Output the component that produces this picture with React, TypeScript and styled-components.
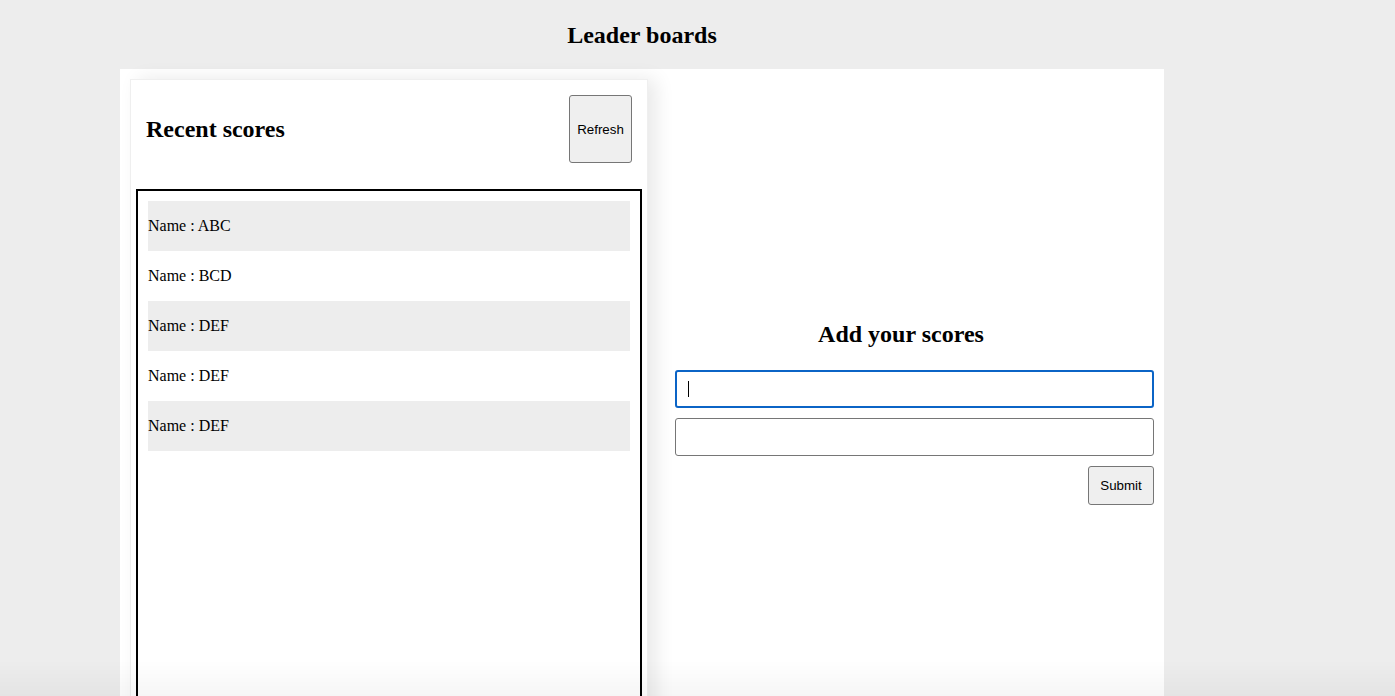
import React from "react";
import styled, { createGlobalStyle } from "styled-components";

const GlobalStyle = createGlobalStyle`
    body {
        margin: 0;
        background: #ededed;
        font-family: "Liberation Serif", "Times New Roman", serif;
        color: #000;
    }
    body::after {
        content: "";
        position: fixed;
        left: 0;
        right: 0;
        bottom: 0;
        height: 36px;
        pointer-events: none;
        background: linear-gradient(rgba(0, 0, 0, 0), rgba(0, 0, 0, 0.035));
    }
`;

const scores = ["ABC", "BCD", "DEF", "DEF", "DEF"];

const App = () => {
    return (
        <>
            <GlobalStyle />
            <Page>
                <PageTitle>Leader boards</PageTitle>
                <Board>
                    <ScoresCard>
                        <CardHeader>
                            <CardTitle>Recent scores</CardTitle>
                            <RefreshButton>Refresh</RefreshButton>
                        </CardHeader>
                        <ScoreList>
                            {scores.map((name, i) => (
                                <ScoreRow key={i} shaded={i % 2 === 0}>
                                    Name : {name}
                                </ScoreRow>
                            ))}
                        </ScoreList>
                    </ScoresCard>
                    <FormColumn>
                        <FormTitle>Add your scores</FormTitle>
                        <ScoreForm onSubmit={(e) => e.preventDefault()}>
                            <InputWrap>
                                <TextInput focused />
                                <Caret />
                            </InputWrap>
                            <TextInput />
                            <SubmitRow>
                                <SubmitButton type="submit">Submit</SubmitButton>
                            </SubmitRow>
                        </ScoreForm>
                    </FormColumn>
                </Board>
            </Page>
        </>
    );
};

const Page = styled.div`
    width: 1044px;
    margin: 0 0 0 120px;
`;

const PageTitle = styled.h2`
    margin: 0;
    height: 69px;
    line-height: 70px;
    font-size: 24px;
    font-weight: 700;
    text-align: center;
`;

const Board = styled.div`
    display: flex;
    align-items: flex-start;
    background: #fff;
    padding: 10px 10px 0;
    height: 700px;
    box-sizing: border-box;
`;

const ScoresCard = styled.section`
    width: 518px;
    height: 680px;
    flex-shrink: 0;
    box-sizing: border-box;
    background: #fff;
    border: 1px solid #efefef;
    box-shadow: 8px 0 18px rgba(0, 0, 0, 0.09);
    padding: 0 5px;
`;

const CardHeader = styled.div`
    display: flex;
    align-items: center;
    justify-content: space-between;
    padding: 15px 10px 26px;
`;

const CardTitle = styled.h2`
    margin: 0;
    font-size: 24px;
    font-weight: 700;
`;

const RefreshButton = styled.button`
    width: 63px;
    height: 68px;
    padding: 0;
    font-family: "Liberation Sans", Arial, sans-serif;
    font-size: 13.33px;
    color: #000;
    background: #efefef;
    border: 1px solid #767676;
    border-radius: 3px;
`;

const ScoreList = styled.div`
    border: 2px solid #000;
    padding: 10px;
    height: 600px;
    box-sizing: border-box;
`;

const ScoreRow = styled.div<{ shaded: boolean }>`
    height: 50px;
    display: flex;
    align-items: center;
    font-size: 16px;
    background: ${({ shaded }) => (shaded ? "#ededed" : "#fff")};
`;

const FormColumn = styled.div`
    flex: 1;
    display: flex;
    flex-direction: column;
    padding-top: 240px;
`;

const FormTitle = styled.h2`
    margin: 0 0 21px;
    font-size: 24px;
    font-weight: 700;
    text-align: center;
    line-height: 30px;
`;

const ScoreForm = styled.form`
    display: flex;
    flex-direction: column;
    gap: 10px;
    padding: 0 0 0 27px;
`;

const InputWrap = styled.div`
    position: relative;
`;

const TextInput = styled.input<{ focused?: boolean }>`
    display: block;
    width: 100%;
    height: 38px;
    box-sizing: border-box;
    border-radius: 3px;
    outline: none;
    font-size: 16px;
    padding: 0 12px;
    border: ${({ focused }) =>
        focused ? "2px solid #0b64c6" : "1px solid #767676"};
`;

const Caret = styled.span`
    position: absolute;
    left: 13px;
    top: 11px;
    width: 1px;
    height: 16px;
    background: #000;
`;

const SubmitRow = styled.div`
    display: flex;
    justify-content: flex-end;
`;

const SubmitButton = styled.button`
    width: 66px;
    height: 39px;
    padding: 0;
    font-family: "Liberation Sans", Arial, sans-serif;
    font-size: 13.33px;
    color: #000;
    background: #efefef;
    border: 1px solid #767676;
    border-radius: 3px;
`;

export default App;
